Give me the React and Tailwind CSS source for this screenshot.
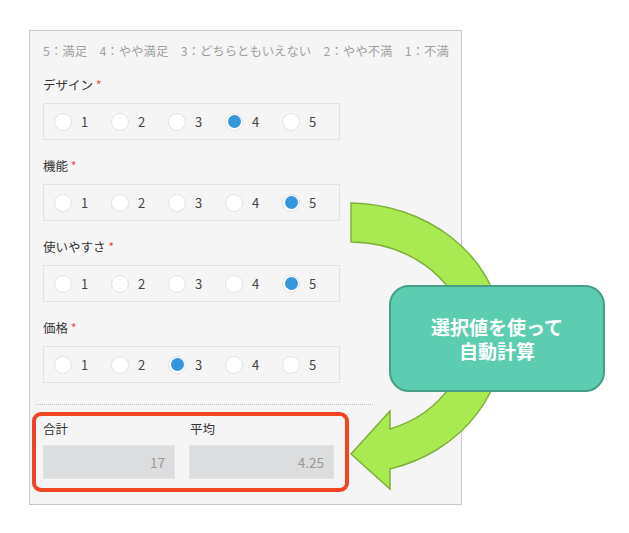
import React from "react";

const FONT = { fontFamily: '"Noto Sans CJK JP", "Noto Sans", sans-serif' };

const QUESTIONS = [
  { label: "デザイン", value: 4 },
  { label: "機能", value: 5 },
  { label: "使いやすさ", value: 5 },
  { label: "価格", value: 3 },
];

function RadioRow({ value }) {
  return (
    <div className="flex h-[37px] w-[297px] items-center border border-[#e3e3e3] pl-[10px]">
      {[1, 2, 3, 4, 5].map((n) => (
        <div key={n} className="flex w-[58.3px] items-center">
          <span className="flex h-[18px] w-[18px] items-center justify-center rounded-full border border-[#e2e2e2] bg-white">
            {n === value && <span className="h-[13px] w-[13px] rounded-full bg-[#3596dc]" />}
          </span>
          <span className="ml-[9px] text-[13px] leading-none text-[#444]">{n}</span>
        </div>
      ))}
    </div>
  );
}

export default function App() {
  return (
    <div className="relative h-[533px] w-[629px] overflow-hidden bg-white" style={FONT}>
      {/* フォーム本体 */}
      <div className="ml-[29px] mt-[30px] h-[475px] w-[433px] border border-[#c8c8c8] bg-[#f5f5f5] pl-[13px] pt-[10px]">
        <p className="h-[20px] whitespace-nowrap text-[12.4px] leading-[20px] text-[#a0a0a0]">
          5：満足　4：やや満足　3：どちらともいえない　2：やや不満　1：不満
        </p>

        <div className="mt-[14px] flex flex-col gap-[16px]">
          {QUESTIONS.map((q) => (
            <div key={q.label}>
              <div className="mb-[8px] h-[20px] text-[12.5px] leading-[20px] text-[#333]">
                {q.label} <span className="text-[#e8504a]">*</span>
              </div>
              <RadioRow value={q.value} />
            </div>
          ))}
        </div>

        <div className="-ml-[7px] mt-[21px] w-[337px] border-t border-dotted border-[#bdbdbd]" />

        {/* 自動計算フィールド */}
        <div className="-ml-[11px] mt-[7px] h-[80px] w-[317px] rounded-[9px] border-4 border-[#f04423] pl-[7px] pt-[4px]">
          <div className="flex gap-[14px]">
            <div className="w-[132px]">
              <div className="mb-[7px] h-[18px] text-[12.5px] leading-[18px] text-[#333]">合計</div>
              <div className="flex h-[34px] items-center justify-end border border-[#e2e2e2] bg-[#dcdddf] pr-[9px] text-[13.5px] text-[#999]">
                17
              </div>
            </div>
            <div className="w-[145px]">
              <div className="mb-[7px] h-[18px] pl-[1px] text-[12.5px] leading-[18px] text-[#333]">平均</div>
              <div className="flex h-[34px] items-center justify-end border border-[#e2e2e2] bg-[#dcdddf] pr-[9px] text-[13.5px] text-[#999]">
                4.25
              </div>
            </div>
          </div>
        </div>
      </div>

      {/* 曲がり矢印 */}
      <svg className="absolute left-0 top-0" width="629" height="533" viewBox="0 0 629 533">
        <path
          d="M351 203 A154.5 135.5 0 0 1 390 469 L390 489 L351 454 L390 411 L390 429 A115.4 96.5 0 0 0 351 242 Z"
          fill="#a9ea52"
          stroke="#80b03c"
          strokeWidth="1.5"
          strokeLinejoin="miter"
        />
      </svg>

      {/* 吹き出し */}
      <div className="absolute left-[389px] top-[285px] flex h-[107px] w-[216px] items-center justify-center rounded-[20px] border-2 border-[#45a086] bg-[#5ccdb0] text-center text-[19px] font-bold leading-[24px] text-white">
        <div>
          <div>選択値を使って</div>
          <div>自動計算</div>
        </div>
      </div>
    </div>
  );
}
